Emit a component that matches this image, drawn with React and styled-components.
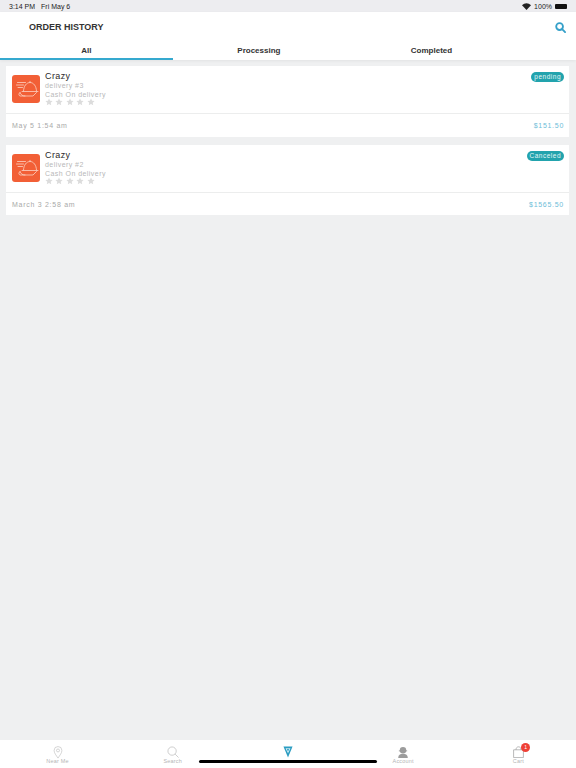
import React from 'react';
import styled, { createGlobalStyle } from 'styled-components';

const GlobalStyle = createGlobalStyle`
  html, body {
    margin: 0;
    padding: 0;
    background: #eff0f1;
    font-family: "Liberation Sans", Arial, sans-serif;
  }
`;

const Page = styled.div`
  position: relative;
  width: 576px;
  height: 768px;
  display: flex;
  flex-direction: column;
  overflow: hidden;
  background: #eff0f1;
`;

const StatusBar = styled.div`
  height: 12px;
  padding: 0 9px 0 9px;
  display: flex;
  align-items: center;
  justify-content: space-between;
  background: #ededf0;
  font-size: 7px;
  color: #222;
`;

const StatusGroup = styled.div`
  display: flex;
  align-items: center;
  gap: ${(p) => p.$gap || 3}px;
`;

const Battery = styled.span`
  display: block;
  width: 12px;
  height: 5px;
  background: #111;
  border-radius: 1px;
`;

const Header = styled.header`
  background: #fff;
  height: 48px;
  display: flex;
  flex-direction: column;
  box-shadow: 0 1px 3px rgba(0, 0, 0, 0.06);
`;

const TitleRow = styled.div`
  height: 30px;
  padding: 0 10px 0 29px;
  display: flex;
  align-items: center;
  justify-content: space-between;
`;

const Title = styled.h1`
  margin: 0;
  font-size: 9px;
  font-weight: 700;
  color: #333;
`;

const Tabs = styled.nav`
  flex: 1;
  display: grid;
  grid-template-columns: repeat(3, 172.6px);
`;

const Tab = styled.div`
  display: flex;
  align-items: center;
  justify-content: center;
  padding-top: 1px;
  font-size: 8px;
  font-weight: 700;
  color: #333;
  border-bottom: 2px solid ${(p) => (p.$active ? '#35a9cf' : 'transparent')};
`;

const List = styled.main`
  flex: 1;
  padding: 6px 7px 0 6px;
  display: flex;
  flex-direction: column;
  gap: 8px;
`;

const Card = styled.article`
  background: #fff;
  height: ${(p) => p.$height}px;
  display: flex;
  flex-direction: column;
`;

const CardBody = styled.div`
  position: relative;
  height: 48px;
  flex: none;
  padding: 5px 6px 0;
  box-sizing: border-box;
  display: flex;
  gap: 5px;
  border-bottom: 1px solid #eceded;
`;

const LogoBox = styled.div`
  width: 28px;
  height: 28px;
  margin-top: 4px;
  flex: none;
  border-radius: 3px;
  background: #f25f36;
  display: flex;
`;

const Info = styled.div`
  display: flex;
  flex-direction: column;
`;

const Name = styled.div`
  font-size: 9px;
  line-height: 10px;
  letter-spacing: 0.4px;
  color: #2a2a2a;
`;

const Detail = styled.div`
  font-size: 7px;
  line-height: 9px;
  letter-spacing: 0.45px;
  color: #b8b8b8;
`;

const Stars = styled.div`
  display: flex;
  gap: 2.4px;
  margin-top: -1px;
`;

const Badge = styled.span`
  position: absolute;
  top: 5.5px;
  right: 5px;
  height: 10px;
  padding: 0 3px;
  border-radius: 5px;
  background: #22a3ad;
  color: #e4f6f7;
  font-size: 6.5px;
  line-height: 10px;
  letter-spacing: 0.5px;
`;

const CardFooter = styled.div`
  flex: 1;
  padding: 0 5px 0 6px;
  display: flex;
  align-items: center;
  justify-content: space-between;
  font-size: 7px;
  letter-spacing: 0.72px;
  color: #a9a9a9;
`;

const Price = styled.span`
  color: #6dbdd8;
`;

const BottomNav = styled.nav`
  height: 28px;
  background: #fff;
  display: grid;
  grid-template-columns: repeat(5, 115.2px);
`;

const NavItem = styled.div`
  position: relative;
  display: flex;
  flex-direction: column;
  align-items: center;
  padding-top: 6px;
  font-size: 5.5px;
  line-height: 7px;
  letter-spacing: 0.2px;
  color: #b5b5b5;
`;

const NavIcon = styled.div`
  position: relative;
  width: 14px;
  height: 12px;
  display: flex;
  justify-content: center;
`;

const NavLabel = styled.span`
  display: block;
`;

const CartCount = styled.span`
  position: absolute;
  top: -3px;
  right: -5px;
  width: 9px;
  height: 9px;
  border-radius: 50%;
  background: #ee4036;
  color: #fff;
  font-size: 5px;
  line-height: 9px;
  text-align: center;
`;

const HomeIndicator = styled.div`
  position: absolute;
  left: 199px;
  bottom: 5px;
  width: 178px;
  height: 3px;
  border-radius: 2px;
  background: #000;
`;

const Star = () => (
  <svg width="8" height="8" viewBox="0 0 24 24" fill="#dcdcdc">
    <path d="M12 1.5l3.2 7 7.6.8-5.7 5.1 1.6 7.5L12 18.1l-6.7 3.8 1.6-7.5L1.2 9.3l7.6-.8z" />
  </svg>
);

const Logo = () => (
  <svg width="28" height="28" viewBox="0 0 28 28" fill="none" stroke="#fbd3c4" strokeWidth="0.8" strokeLinecap="round">
    <path d="M11.5 16c.2-5 3-8.500 6.500-8.500s6.300 3.500 6.500 8.500" />
    <path d="M10 16.500h16" />
    <path d="M18 7.500V6.300" />
    <path d="M5.500 7.500h8M4.500 10h7M6 12.500h4.500" />
    <path d="M8 17.500c1 2.500 2.500 3.500 5 3.500h8l3.500-3.500" />
    <path d="M8 17.500c-1.500.5-1.500 3 0 3.500h5" />
  </svg>
);

const orders = [
  { id: 3, status: 'pending', date: 'May 5 1:54 am', price: '$151.50', height: 71 },
  { id: 2, status: 'Canceled', date: 'March 3 2:58 am', price: '$1565.50', height: 70 },
];

function OrderCard({ order }) {
  return (
    <Card $height={order.height}>
      <CardBody>
        <LogoBox><Logo /></LogoBox>
        <Info>
          <Name>Crazy</Name>
          <Detail>delivery #{order.id}</Detail>
          <Detail>Cash On delivery</Detail>
          <Stars>
            {[0, 1, 2, 3, 4].map((i) => <Star key={i} />)}
          </Stars>
        </Info>
        <Badge>{order.status}</Badge>
      </CardBody>
      <CardFooter>
        <span>{order.date}</span>
        <Price>{order.price}</Price>
      </CardFooter>
    </Card>
  );
}

export default function App() {
  return (
    <Page>
      <GlobalStyle />
      <StatusBar>
        <StatusGroup $gap={6}>
          <span>3:14 PM</span>
          <span>Fri May 6</span>
        </StatusGroup>
        <StatusGroup>
          <svg width="9" height="7" viewBox="0 0 18 14" fill="#222">
            <path d="M9 14L0 4.500C5-1 13-1 18 4.500z" />
          </svg>
          <span>100%</span>
          <Battery />
        </StatusGroup>
      </StatusBar>
      <Header>
        <TitleRow>
          <Title>ORDER HISTORY</Title>
          <svg width="11" height="11" viewBox="0 0 12 12" fill="none" stroke="#35a0c9" strokeWidth="2">
            <circle cx="5" cy="5" r="3.700" />
            <path d="M7.800 7.800L11 11" strokeLinecap="round" />
          </svg>
        </TitleRow>
        <Tabs>
          <Tab $active>All</Tab>
          <Tab>Processing</Tab>
          <Tab>Completed</Tab>
        </Tabs>
      </Header>
      <List>
        {orders.map((order) => <OrderCard key={order.id} order={order} />)}
      </List>
      <BottomNav>
        <NavItem>
          <NavIcon>
            <svg width="10" height="13" viewBox="0 0 10 14" fill="none" stroke="#b5b5b5" strokeWidth="0.600">
              <path d="M5 13C3 10 .8 7.500.8 4.800a4.200 4.200 0 0 1 8.400 0C9.200 7.500 7 10 5 13z" />
              <circle cx="5" cy="4.800" r="1.600" />
            </svg>
          </NavIcon>
          <NavLabel>Near Me</NavLabel>
        </NavItem>
        <NavItem>
          <NavIcon>
            <svg width="12" height="12" viewBox="0 0 13 13" fill="none" stroke="#b5b5b5" strokeWidth="0.700">
              <circle cx="5.500" cy="5.500" r="4.500" />
              <path d="M8.800 8.800L12.500 12.500" />
            </svg>
          </NavIcon>
          <NavLabel>Search</NavLabel>
        </NavItem>
        <NavItem>
          <NavIcon>
            <svg width="10" height="12" viewBox="0 0 11 13">
              <path d="M.5.500h10L5.500 12.500z" fill="#2c9dc2" />
              <path d="M2.800 2.500h5.400L5.500 8z" fill="#d7eef5" />
              <circle cx="5.500" cy="4" r="1" fill="#2c9dc2" />
            </svg>
          </NavIcon>
        </NavItem>
        <NavItem>
          <NavIcon>
            <svg width="12" height="12" viewBox="0 0 12 13" fill="#9c9c9c">
              <circle cx="6" cy="4.500" r="3.500" />
              <path d="M.8 13c0-3 2-4.500 5.200-4.500s5.200 1.500 5.200 4.500z" />
              <path d="M1.500 4.800h9v1h-9z" />
            </svg>
          </NavIcon>
          <NavLabel>Account</NavLabel>
        </NavItem>
        <NavItem>
          <NavIcon>
            <svg width="11" height="12" viewBox="0 0 11 12" fill="none" stroke="#9c9c9c" strokeWidth="0.700">
              <path d="M.6 3.800h9.800v7.800H.6z" />
              <path d="M3 3.800C3 2 4 .8 5.500 .8S8 2 8 3.800" />
            </svg>
            <CartCount>1</CartCount>
          </NavIcon>
          <NavLabel>Cart</NavLabel>
        </NavItem>
      </BottomNav>
      <HomeIndicator />
    </Page>
  );
}
